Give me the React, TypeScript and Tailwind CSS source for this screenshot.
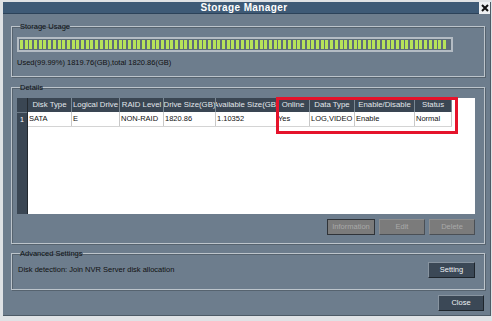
import React from 'react';

const font = { fontFamily: '"Liberation Sans", Arial, sans-serif' };

type Col = { label: string; w: number; value: string };

const cols: Col[] = [
  { label: 'Disk Type', w: 44, value: 'SATA' },
  { label: 'Logical Drive', w: 48, value: 'E' },
  { label: 'RAID Level', w: 44, value: 'NON-RAID' },
  { label: 'Drive Size(GB)', w: 52, value: '1820.86' },
  { label: 'Available Size(GB)', w: 61, value: '1.10352' },
  { label: 'Online', w: 33, value: 'Yes' },
  { label: 'Data Type', w: 45, value: 'LOG,VIDEO' },
  { label: 'Enable/Disable', w: 60, value: 'Enable' },
  { label: 'Status', w: 37, value: 'Normal' },
];

function Group({ title, className, children }: { title: string; className: string; children: React.ReactNode }) {
  return (
    <fieldset
      className={`border border-[#bcc4cb] shadow-[inset_1px_1px_0_#56636f,1px_1px_0_#56636f] pl-[5px] ${className}`}
    >
      <legend className="ml-[3px] px-0 text-[7.5px] leading-[9px] text-[#0d1114]">{title}</legend>
      {children}
    </fieldset>
  );
}

function Btn({ label, kind, className = '' }: { label: string; kind: 'off' | 'focus' | 'on'; className?: string }) {
  const look =
    kind === 'on'
      ? 'bg-[#3b4856] text-[#eef1f4] border-t-[#8894a0] border-l-[#8894a0] border-r-[#1e252c] border-b-[#1e252c]'
      : kind === 'focus'
        ? 'bg-[#7b7b7b] text-[#a9a9a9] border-[#2f3338]'
        : 'bg-[#7b7b7b] text-[#a9a9a9] border-t-[#8e8e8e] border-l-[#8e8e8e] border-r-[#4a4f55] border-b-[#4a4f55]';
  return (
    <div className={`h-[16px] border flex items-center justify-center text-[7.5px] ${look} ${className}`}>{label}</div>
  );
}

export default function App() {
  return (
    <div className="w-[492px] h-[321px] bg-[#dfe2e5] overflow-hidden" style={font}>
      <div className="ml-[3px] mt-[2px] w-[488px] h-[314px] bg-[#6d7d8d] border-r border-b border-[#4d5a66] flex flex-col">
        {/* title bar */}
        <div className="h-[12px] flex items-stretch shrink-0">
          <div className="flex-1 bg-[#3e5a76] border-b border-[#2c4259] flex items-center justify-center">
            <span className="text-[10px] font-bold text-white tracking-[0.4px] leading-none pl-[6px]">Storage Manager</span>
          </div>
          <div className="w-[11px] bg-[#eef0f2] flex items-center justify-center">
            <svg width="8" height="8" viewBox="0 0 8 8">
              <path d="M1 1 L7 7 M7 1 L1 7" stroke="#111" strokeWidth="2" />
            </svg>
          </div>
        </div>

        <div className="flex flex-col pl-[8px] pr-[5px] pt-[8px]">
          <Group title="Storage Usage" className="h-[55px]">
            <div className="mt-[6px] w-[436px] h-[15px] border-2 border-[#b4bcc4] bg-[#5e6d7b] p-[1px]">
              <div className="h-full w-[428px] bg-[repeating-linear-gradient(90deg,#b6e35a_0_3px,transparent_3px_4.7px)]" />
            </div>
            <div className="mt-[6px] text-[7.5px] leading-[9px] text-[#111]">Used(99.99%) 1819.76(GB),total 1820.86(GB)</div>
          </Group>

          <Group title="Details" className="h-[161px] mt-[6px]">
            <div className="relative mt-[6px] w-[458px] h-[116px] bg-white flex">
              <div className="w-[11px] bg-[#3a4653] border-r border-[#23292f] flex flex-col">
                <div className="h-[14px]" />
                <div className="h-[15px] flex items-center justify-center text-[7px] text-white border-t border-[#6f7c88]">1</div>
              </div>
              <div className="flex flex-col">
                <div className="flex h-[14px]">
                  {cols.map(c => (
                    <div
                      key={c.label}
                      className="bg-[#3a4653] border-r border-[#7a8894] flex items-center justify-center overflow-hidden whitespace-nowrap text-[7.8px] text-[#e3e7eb]"
                      style={{ width: c.w }}
                    >
                      <span className="shrink-0">{c.label}</span>
                    </div>
                  ))}
                </div>
                <div className="flex h-[15px] border-b border-[#d4d4d4]">
                  {cols.map(c => (
                    <div
                      key={c.label}
                      className="border-r border-[#c8c8c8] flex items-center pl-[1px] overflow-hidden whitespace-nowrap text-[7.5px] text-[#111]"
                      style={{ width: c.w }}
                    >
                      {c.value}
                    </div>
                  ))}
                </div>
              </div>
              <div className="absolute left-[259px] top-[-1px] w-[182px] h-[37px] border-[3px] border-[#e5132b]" />
            </div>
            <div className="mt-[5px] flex justify-end gap-[4px] pr-[9px]">
              <Btn label="Information" kind="focus" className="w-[48px]" />
              <Btn label="Edit" kind="off" className="w-[46px]" />
              <Btn label="Delete" kind="off" className="w-[46px]" />
            </div>
          </Group>

          <Group title="Advanced Settings" className="h-[41px] mt-[5px]">
            <div className="flex items-center justify-between pr-[9px] mt-[4px]">
              <span className="text-[7.5px] text-[#111] pl-[1px]">Disk detection: Join NVR Server disk allocation</span>
              <Btn label="Setting" kind="on" className="w-[47px]" />
            </div>
          </Group>

          <div className="mt-[5px] flex justify-end pr-[1px]">
            <Btn label="Close" kind="on" className="w-[46px]" />
          </div>
        </div>
      </div>
    </div>
  );
}
